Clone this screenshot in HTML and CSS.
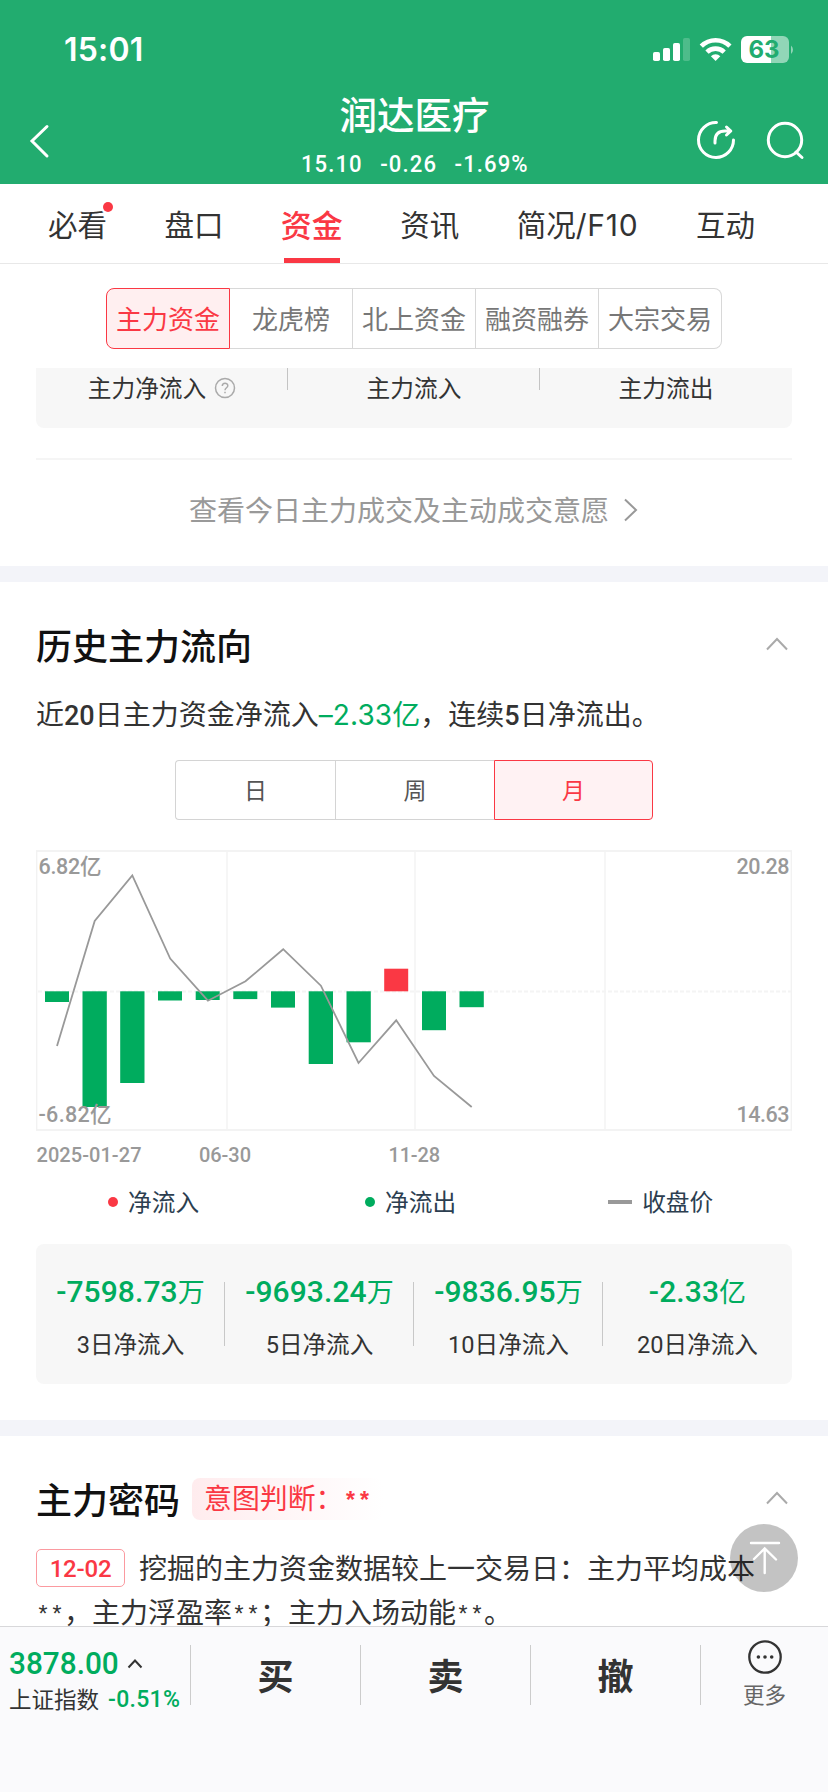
FILE: index.html
```html
<!DOCTYPE html>
<html lang="zh-CN">
<head>
<meta charset="utf-8">
<title>润达医疗</title>
<link rel="stylesheet" href="styles.css">
</head>
<body>
<div class="screen">
  <header class="header">
    <div class="status">
      <span class="clock">15:01</span>
      <svg class="status-icons" width="144" height="32" viewBox="0 0 144 32">
        <g fill="#fff">
          <rect x="0" y="18" width="7" height="9" rx="1.8"/>
          <rect x="10" y="14" width="7" height="13" rx="1.8"/>
          <rect x="20" y="9" width="7" height="18" rx="1.8"/>
          <rect x="30" y="4" width="7" height="23" rx="1.8" opacity=".2"/>
        </g>
        <g fill="none" stroke="#fff" stroke-width="4.6">
          <path d="M48.300 12.200A20.200 20.200 0 0 1 76.900 12.200"/>
          <path d="M54 18.200A12.200 12.200 0 0 1 71.200 18.200"/>
        </g>
        <path d="M62.600 27L57.900 22.200A6.800 6.800 0 0 1 67.300 22.200Z" fill="#fff"/>
        <path d="M94 2h24v27H94a6 6 0 0 1-6-6V8a6 6 0 0 1 6-6Z" fill="#fff"/>
        <path d="M118 2h12a6 6 0 0 1 6 6v15a6 6 0 0 1-6 6h-12Z" fill="#fff" opacity=".5"/>
        <path d="M138 11.500a5.500 5.500 0 0 1 0 8.500Z" fill="#fff" opacity=".5"/>
        <text class="battery" x="111" y="24.200" text-anchor="middle">63</text>
      </svg>
    </div>
    <div class="titlebar">
      <svg width="24" height="36" viewBox="0 0 24 36" class="back"><path d="M20 3.500L5 18L20 33" fill="none" stroke="#fff" stroke-width="3" stroke-linecap="round"/></svg>
      <div class="stock">
        <h1 class="stock-name">润达医疗</h1>
        <div class="quote"><span>15.10</span><span>-0.26</span><span>-1.69%</span></div>
      </div>
      <div class="actions">
        <svg width="42" height="42" viewBox="0 0 42 42" fill="none" stroke="#fff" stroke-width="3" stroke-linecap="round" stroke-linejoin="round"><path d="M21.500 3.500A17.500 17.500 0 1 0 38.500 21"/><path d="M20 24V22Q20 12 30 12H35M31.500 8L35.800 12L31.500 16"/></svg>
        <svg width="42" height="42" viewBox="0 0 42 42" fill="none" stroke="#fff" stroke-width="3" stroke-linecap="round"><circle cx="20" cy="21" r="16.700"/><path d="M31 33L37 38.500"/></svg>
      </div>
    </div>
  </header>

  <nav class="tabs">
    <a class="tab">必看<i class="dot"></i></a>
    <a class="tab">盘口</a>
    <a class="tab on">资金</a>
    <a class="tab">资讯</a>
    <a class="tab">简况<span class="latin">/F10</span></a>
    <a class="tab">互动</a>
  </nav>

  <div class="seg">
    <span class="seg-item on">主力资金</span><span class="seg-item">龙虎榜</span><span class="seg-item">北上资金</span><span class="seg-item">融资融券</span><span class="seg-item">大宗交易</span>
  </div>

  <div class="summary">
    <div class="summary-col">主力净流入<svg width="22" height="22" viewBox="0 0 22 22"><circle cx="11" cy="11" r="9.500" fill="none" stroke="#aaa" stroke-width="1.500"/><path d="M8.300 9C8.300 5.400 13.800 5.500 13.800 8.800C13.800 10.800 11 10.800 11 13.200M11 14.700V16.200" fill="none" stroke="#aaa" stroke-width="1.500"/></svg></div>
    <div class="summary-col">主力流入</div>
    <div class="summary-col">主力流出</div>
  </div>
  <a class="more-link">查看今日主力成交及主动成交意愿<svg width="16" height="24" viewBox="0 0 16 24"><path d="M2 1.500L13 12L2 22.500" fill="none" stroke="#999" stroke-width="2"/></svg></a>

  <section class="section history">
    <div class="section-head">
      <h2 class="section-title">历史主力流向</h2>
      <svg class="fold" width="22" height="14" viewBox="0 0 22 14"><path d="M1 12.500L11 2L21 12.500" fill="none" stroke="#aaa" stroke-width="2"/></svg>
    </div>
    <p class="lead">近<b>20</b>日主力资金净流入<em>–2.33亿</em>，连续<b>5</b>日净流出。</p>
    <div class="period">
      <span class="period-item">日</span><span class="period-item">周</span><span class="period-item on">月</span>
    </div>
    <svg class="chart" width="756" height="324" viewBox="36 850 756 324">
      <rect x="36.500" y="851" width="755" height="279" fill="none" stroke="#f2f2f2" stroke-width="1.800"/>
      <path d="M227 852V1129M415 852V1129M605 852V1129" stroke="#f6f6f6" stroke-width="2"/>
      <path d="M38 991.500H791" stroke="#f4f4f4" stroke-width="2" stroke-dasharray="4 2"/>
      <g fill="#00ac5e">
        <rect x="45" y="991.300" width="24" height="10.700"/>
        <rect x="82.500" y="991.300" width="24.300" height="115.700"/>
        <rect x="120.200" y="991.300" width="24.300" height="91.700"/>
        <rect x="158" y="991.300" width="24" height="9.200"/>
        <rect x="195.700" y="991.300" width="24" height="8.700"/>
        <rect x="233.300" y="991.300" width="24" height="7.800"/>
        <rect x="271" y="991.300" width="24" height="16.300"/>
        <rect x="308.700" y="991.300" width="24.300" height="72.700"/>
        <rect x="346.500" y="991.300" width="24.300" height="51"/>
        <rect x="422" y="991.300" width="24" height="38.900"/>
        <rect x="459.500" y="991.300" width="24.300" height="15.900"/>
      </g>
      <rect x="384.200" y="968.700" width="24" height="22.600" fill="#fa3844"/>
      <path d="M57 1046L94.700 921L132.300 875.500L170.200 958.500L207.900 1000.700L245.500 981.300L283.200 949.200L320.900 985.700L358.500 1063L396.200 1020.300L434 1076L471.700 1107" fill="none" stroke="#999" stroke-width="1.800"/>
      <g class="scale">
        <text x="38.500" y="874.300" textLength="63">6.82亿</text>
        <text x="38.500" y="1122.300" textLength="73">-6.82亿</text>
        <text x="736.500" y="874.300" textLength="53">20.28</text>
        <text x="736.500" y="1122.300" textLength="53">14.63</text>
      </g>
      <g class="dates">
        <text x="36.500" y="1162" textLength="105">2025-01-27</text>
        <text x="199" y="1162" textLength="52">06-30</text>
        <text x="388.500" y="1162" textLength="51.500">11-28</text>
      </g>
    </svg>
    <div class="legend">
      <span class="legend-item in"><i class="mark"></i>净流入</span>
      <span class="legend-item out"><i class="mark"></i>净流出</span>
      <span class="legend-item price"><i class="mark"></i>收盘价</span>
    </div>
    <div class="totals">
      <div class="total"><strong>-7598.73<small>万</small></strong><span>3日净流入</span></div>
      <div class="total"><strong>-9693.24<small>万</small></strong><span>5日净流入</span></div>
      <div class="total"><strong>-9836.95<small>万</small></strong><span>10日净流入</span></div>
      <div class="total"><strong>-2.33<small>亿</small></strong><span>20日净流入</span></div>
    </div>
  </section>

  <section class="section code">
    <div class="section-head">
      <h2 class="section-title">主力密码</h2>
      <span class="intent">意图判断：<span class="stars">**</span></span>
      <svg class="fold" width="22" height="14" viewBox="0 0 22 14"><path d="M1 12.500L11 2L21 12.500" fill="none" stroke="#aaa" stroke-width="2"/></svg>
    </div>
    <p class="detail"><span class="date-tag">12-02</span>挖掘的主力资金数据较上一交易日：主力平均成本</p>
    <p class="detail"><span class="stars">**</span>，主力浮盈率<span class="stars">**</span>；主力入场动能<span class="stars">**</span>。</p>
    <svg class="to-top" width="68" height="68" viewBox="0 0 68 68"><circle cx="34" cy="34" r="34" fill="#000" fill-opacity=".235"/><path d="M21 19H49M34.700 49V24.500M24 35L34.700 24.500L46 35.500" fill="none" stroke="#fff" stroke-width="2.400" stroke-linecap="round"/></svg>
  </section>

  <footer class="bottom">
    <div class="index">
      <div class="index-value"><span class="points">3878.00</span><svg width="16" height="11" viewBox="0 0 16 11"><path d="M1.500 9.500L8 2.500L14.500 9.500" fill="none" stroke="#333" stroke-width="2"/></svg></div>
      <div class="index-name">上证指数<b>-0.51%</b></div>
    </div>
    <div class="trade">买</div>
    <div class="trade">卖</div>
    <div class="trade">撤</div>
    <div class="more">
      <svg width="36" height="36" viewBox="0 0 36 36"><circle cx="18" cy="18" r="15.700" fill="none" stroke="#333" stroke-width="2.300"/><g fill="#333"><circle cx="11.400" cy="18" r="1.800"/><circle cx="18" cy="18" r="1.800"/><circle cx="24.700" cy="18" r="1.800"/></g></svg>
      <span>更多</span>
    </div>
  </footer>
</div>
</body>
</html>
```
FILE: styles.css
```css
* { box-sizing: border-box; }
body { margin: 0; background: #fff; font-family: "Noto Sans CJK SC", sans-serif; color: #333; }
h1, h2, p { margin: 0; }
b, em, strong, small, i { font-style: normal; font-weight: inherit; font-size: inherit; }
svg { display: block; flex: none; }

.screen { width: 828px; height: 1792px; overflow: hidden; display: flex; flex-direction: column; background: #fff; }

/* header */
.header { height: 184px; flex: none; background: #22ac6f; color: #fff; }
.status { height: 92px; padding: 34px 31px 0 64px; display: flex; justify-content: space-between; }
.clock { font: 600 32px/32px Inter, sans-serif; letter-spacing: .2px; }
.battery { font: 700 24px Inter, sans-serif; fill: #22ac6f; }
.titlebar { height: 92px; padding: 0 21px 0 27px; display: grid; grid-template-columns: 107px 1fr 112px; }
.back { margin-top: 31px; }
.stock { display: flex; flex-direction: column; align-items: center; }
.stock-name { margin-top: -2px; font-size: 37.500px; line-height: 46px; font-weight: 500; }
.quote { display: flex; gap: 19px; margin-top: 14px; font: 500 24px/28px Roboto, sans-serif; letter-spacing: 1.200px; transform: scaleX(.92); }
.actions { display: flex; gap: 28px; margin-top: 27px; }

/* tabs */
.tabs { height: 80px; flex: none; display: flex; justify-content: space-between; padding: 0 73px 0 48px; border-bottom: 1px solid #e8e8e8; }
.tab { position: relative; height: 79px; font-size: 29.500px; line-height: 79px; }
.tab.on { color: #fa3844; font-size: 31px; font-weight: 500; }
.tab.on::after { content: ""; position: absolute; left: 50%; margin-left: -28px; bottom: 0; width: 56px; height: 5px; background: #fa3844; }
.latin { font-family: Inter, sans-serif; font-size: 30px; letter-spacing: .800px; }
.dot { position: absolute; top: 18px; right: -6px; width: 10px; height: 10px; border-radius: 50%; background: #fa3844; }

/* category switch */
.seg { display: grid; grid-template-columns: 124px repeat(4, 123px); width: 616px; height: 61px; flex: none; margin: 24px 0 0 106px; }
.seg-item { border: 1px solid #d8d8d8; border-left: 0; text-align: center; font-size: 26px; line-height: 57px; color: #777; }
.seg-item.on { border: 1px solid #fa3844; border-radius: 8px 0 0 8px; background: #ffeff0; color: #fa3844; }
.seg-item:last-child { border-radius: 0 8px 8px 0; }

/* summary */
.summary { flex: none; display: grid; grid-template-columns: repeat(3, 1fr); margin: 19px 36px 0; height: 60px; background: #f7f7f7; border-radius: 0 0 8px 8px; }
.summary-col { position: relative; display: flex; justify-content: center; gap: 8px; font-size: 23.700px; line-height: 38px; }
.summary-col svg { margin-top: 9px; }
.summary-col + .summary-col::before { content: ""; position: absolute; left: -1px; top: 0; width: 1px; height: 22px; background: #c4c4c4; }
.more-link { flex: none; display: flex; justify-content: center; gap: 14px; margin: 30px 36px 0; height: 108px; border-top: 2px solid #f5f5f5; font-size: 28px; line-height: 98px; color: #999; }
.more-link svg { margin-top: 38px; }

/* sections */
.section { flex: none; padding: 0 36px; border-top: 16px solid #f3f4f9; }
.section-head { display: flex; align-items: center; }
.section-title { font-size: 36px; line-height: 48px; font-weight: 500; color: #111; }
.fold { margin: 0 4px 0 auto; }
.history { height: 854px; }
.history .section-head { margin-top: 38px; }
.lead { height: 40px; margin-top: 25px; font-size: 28px; line-height: 40px; white-space: nowrap; }
.lead b { font: 500 27px/40px Roboto, sans-serif; }
.lead em { font-family: Inter, "Noto Sans CJK SC", sans-serif; letter-spacing: .100px; color: #00ac5e; }
.period { display: grid; grid-template-columns: 160px 159px 159px; width: 478px; height: 60px; margin: 27px auto 0; }
.period-item { border: 1px solid #d4d4d4; border-right: 0; text-align: center; font-size: 23px; line-height: 56px; color: #555; }
.period-item:first-child { border-radius: 4px 0 0 4px; }
.period-item.on { border: 1px solid #fa3844; border-radius: 0 4px 4px 0; background: #fff2f3; color: #fa3844; }
.chart { margin-top: 30px; }
.scale { font: 500 21.500px Roboto, "Noto Sans CJK SC", sans-serif; fill: #999; }
.dates { font: 500 20px Roboto, sans-serif; fill: #999; }
.legend { display: flex; padding-left: 72px; margin-top: 10px; font-size: 23.700px; line-height: 34px; color: #2c3e50; }
.legend-item { display: flex; align-items: center; gap: 10px; }
.legend-item.out { margin: 0 152px 0 166px; }
.mark { width: 10px; height: 10px; border-radius: 50%; background: #fa3844; margin-top: 2px; }
.out .mark { background: #00ac5e; }
.price .mark { width: 24px; height: 4px; border-radius: 0; background: #999; }
.totals { display: grid; grid-template-columns: repeat(4, 1fr); height: 140px; margin-top: 26px; background: #f7f7f7; border-radius: 8px; }
.total { position: relative; display: flex; flex-direction: column; align-items: center; white-space: nowrap; }
.total strong { margin-top: 30px; font: 500 30px/36px Roboto, "Noto Sans CJK SC", sans-serif; letter-spacing: .100px; color: #00ac5e; }
.total small { font-size: 27px; font-weight: 400; }
.total span { margin-top: 16px; font: 400 23.600px/36px Roboto, "Noto Sans CJK SC", sans-serif; }
.total + .total::before { content: ""; position: absolute; left: -1px; top: 38px; width: 1px; height: 64px; background: #c8c8c8; }

/* forecast */
.code { position: relative; height: 206px; }
.code .section-head { height: 48px; margin-top: 38px; }
.intent { height: 42px; margin: 2px 0 0 12px; padding: 0 12px; border-radius: 8px; background: linear-gradient(90deg, #ffecee, #fff); font-size: 27.900px; line-height: 38px; color: #fa3844; }
.stars { font-family: "Liberation Mono", monospace; font-size: 23.300px; }
.intent .stars { font-weight: 700; }
.detail { height: 44px; font-size: 28px; line-height: 44px; white-space: nowrap; }
.section-head + .detail { margin-top: 23px; }
.date-tag { position: relative; top: -2px; display: inline-block; width: 89px; height: 38px; margin-right: 14px; border: 1px solid #fb9aa0; border-radius: 5px; text-align: center; font: 500 24px/38px Roboto, sans-serif; letter-spacing: -.200px; color: #fa3844; }
.to-top { position: absolute; left: 730px; top: 88px; }

/* bottom bar */
.bottom { position: relative; flex: none; height: 166px; border-top: 1px solid #d8d8da; background: #fafafc; display: grid; grid-template-columns: 190px repeat(3, 170px) 128px; padding-top: 18px; }
.index { padding-left: 9px; height: 60px; }
.index-value { display: flex; align-items: center; gap: 8px; font: 500 32px/36px Roboto, sans-serif; color: #00ac5e; }
.points { width: 110px; transform: scaleX(.93); transform-origin: left; }
.index-name { display: flex; gap: 9px; font-size: 22.500px; line-height: 34px; white-space: nowrap; }
.index-name b { font: 500 23px/38px Roboto, sans-serif; letter-spacing: .300px; color: #00ac5e; }
.trade { height: 60px; border-left: 1px solid #ccc; text-align: center; font-size: 36px; line-height: 58px; font-weight: 600; }
.more { height: 60px; border-left: 1px solid #ccc; display: flex; flex-direction: column; align-items: center; font-size: 21.500px; line-height: 32px; color: #666; }
.more svg { margin-top: -6px; }
.more span { margin-top: 3px; }
```
